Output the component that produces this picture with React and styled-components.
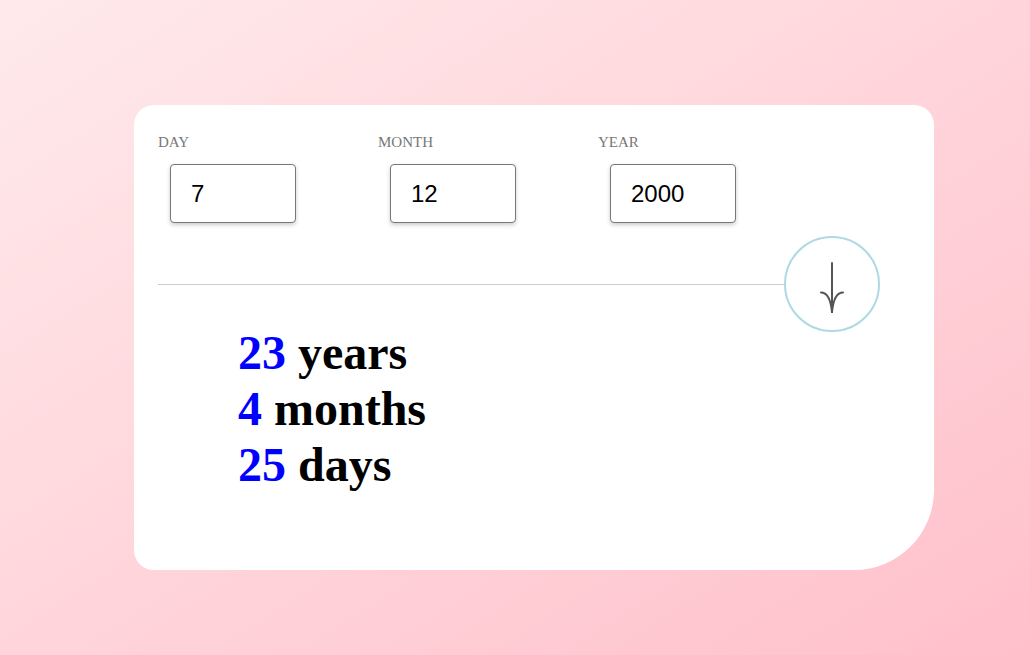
import React from "react";
import styled, { createGlobalStyle } from "styled-components";

const Global = createGlobalStyle`
  html, body { margin: 0; padding: 0; }
  body {
    min-height: 100vh;
    background: linear-gradient(to bottom right, #ffeaeb, #ffc0cb);
    font-family: "Liberation Serif", "Times New Roman", serif;
  }
`;

const Page = styled.div`
  padding: 105px 0 0 134px;
  min-height: 655px;
  box-sizing: border-box;
`;

const Card = styled.div`
  width: 800px;
  height: 465px;
  box-sizing: border-box;
  background: #fff;
  border-radius: 20px 20px 80px 20px;
  padding: 29px 24px 0 24px;
`;

const Fields = styled.div`
  display: flex;
`;

const Field = styled.div`
  width: 220px;
  display: flex;
  flex-direction: column;
`;

const Label = styled.label`
  font-family: "Liberation Serif", serif;
  font-size: 15px;
  line-height: 17px;
  color: #777;
  text-transform: uppercase;
`;

const Input = styled.input`
  margin: 13px 0 0 12px;
  width: 126px;
  height: 59px;
  box-sizing: border-box;
  border: 1px solid #777;
  border-radius: 4px;
  box-shadow: 0 2px 4px rgba(0, 0, 0, 0.2);
  padding: 0 20px;
  font-family: "Liberation Sans", Arial, sans-serif;
  font-size: 24px;
  color: #000;
  outline: none;
`;

const DividerRow = styled.div`
  display: flex;
  align-items: center;
  margin-top: 13px;
  padding-right: 30px;
`;

const Line = styled.div`
  flex: 1;
  height: 1px;
  background: #ccc;
`;

const Circle = styled.button`
  width: 96px;
  height: 96px;
  box-sizing: border-box;
  border-radius: 50%;
  border: 2px solid #add8e6;
  background: #fff;
  display: flex;
  align-items: center;
  justify-content: center;
  padding: 0;
  cursor: pointer;
`;

const ArrowSvg = styled.svg`
  margin-top: 7px;
`;

const Results = styled.div`
  margin-top: -7px;
  padding-left: 80px;
`;

const ResultLine = styled.div`
  font-family: "Liberation Serif", "Times New Roman", serif;
  font-weight: bold;
  font-size: 48px;
  line-height: 56px;
  color: #000;
`;

const Num = styled.span`
  color: #0000ff;
`;

const Arrow = () => (
  <ArrowSvg width="26" height="52" viewBox="0 0 26 52" fill="none" stroke="#555" strokeWidth="2" strokeLinecap="round">
    <line x1="13" y1="1" x2="13" y2="50" />
    <path d="M2 30.5 C7.5 30.5 11.5 35 13 50" />
    <path d="M24 30.5 C18.5 30.5 14.5 35 13 50" />
  </ArrowSvg>
);

export default function App() {
  const fields = [
    { label: "Day", value: "7" },
    { label: "Month", value: "12" },
    { label: "Year", value: "2000" },
  ];
  const results = [
    { n: 23, unit: "years" },
    { n: 4, unit: "months" },
    { n: 25, unit: "days" },
  ];
  return (
    <>
      <Global />
      <Page>
        <Card>
          <Fields>
            {fields.map((f) => (
              <Field key={f.label}>
                <Label>{f.label}</Label>
                <Input type="text" defaultValue={f.value} />
              </Field>
            ))}
          </Fields>
          <DividerRow>
            <Line />
            <Circle aria-label="Calculate">
              <Arrow />
            </Circle>
          </DividerRow>
          <Results>
            {results.map((r) => (
              <ResultLine key={r.unit}>
                <Num>{r.n}</Num> {r.unit}
              </ResultLine>
            ))}
          </Results>
        </Card>
      </Page>
    </>
  );
}
